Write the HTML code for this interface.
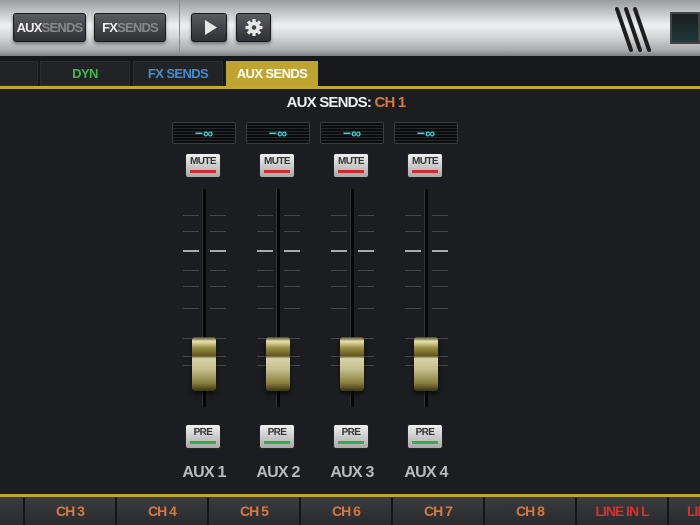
<!DOCTYPE html>
<html><head><style>
*{margin:0;padding:0;box-sizing:border-box}
body{width:700px;height:525px;overflow:hidden;background:#1c1d21;font-family:"Liberation Sans",sans-serif;position:relative}
.top{position:absolute;left:0;top:0;width:700px;height:56px;background:linear-gradient(#9a9b9d 0%,#c9cacc 25%,#eef0f1 45%,#d6d7d8 65%,#a9aaac 90%,#7d7e80 100%)}
.btn{position:absolute;top:13px;height:29px;border-radius:3px;background:linear-gradient(#5a5b5e,#2f3033);border:1px solid #1a1a1a;box-shadow:0 2px 3px rgba(0,0,0,.4);color:#888;font-weight:bold;font-size:13px;line-height:27px;text-align:center;letter-spacing:-0.8px}
.btn b{color:#eee}
.sep{position:absolute;left:179px;top:0;width:1px;height:56px;background:#8a8b8d}
.tabbar{position:absolute;top:56px;left:0;width:700px;height:30px;background:#17181b}
.tab{position:absolute;top:5px;height:25px;background:#222327;border:1px solid #2c2d31;font-weight:bold;font-size:13px;text-align:center;line-height:24px;letter-spacing:-0.6px}
.yl{position:absolute;left:0;width:700px;height:3px;background:#c0a830}
.col{position:absolute;top:0;width:74px;height:525px}
.meter{position:absolute;left:2px;top:122px;width:64px;height:22px;background:repeating-linear-gradient(#0b0c0d 0 2px,#26282a 2px 3px);border:1px solid #3a3b3e;border-radius:2px;color:#35d6d6;font-size:14px;font-weight:bold;text-align:center;line-height:20px}
.mute,.pre{position:absolute;left:15px;width:36px;height:25px;border-radius:3px;background:linear-gradient(#f0f0f0,#a8a8a8);border:1px solid #222;font-size:10px;font-weight:bold;color:#333;text-align:center;line-height:16px;letter-spacing:-0.6px}
.mute{top:153px}.pre{top:424px}
.mute i,.pre i{position:absolute;left:4px;right:4px;bottom:4px;height:3px;background:#d02a30}
.pre i{background:#30b040}
.track{position:absolute;left:32px;top:189px;width:4px;height:218px;background:#050505;border-left:1px solid #333}
.tk{position:absolute;height:1px;width:16px;background:#45464a}
.tk.b{height:2px;background:#aaa}
.cap{position:absolute;left:22px;top:337px;width:24px;height:54px;border-radius:3px;background:linear-gradient(#4a4320 0%,#e8e2b0 8%,#9a8f45 20%,#5d5420 35%,#d8d4a8 40%,#c4be8c 60%,#8a8040 85%,#3a3410 100%);box-shadow:0 3px 4px rgba(0,0,0,.6)}
.lbl{position:absolute;left:0;width:68px;top:464px;text-align:center;color:#bbb;font-weight:bold;font-size:16px;letter-spacing:-0.8px}
.bot{position:absolute;top:497px;left:0;width:700px;height:28px;background:linear-gradient(#3a3b3e,#2a2b2e)}
.ch{position:absolute;top:0;height:28px;width:92px;border-left:2px solid #151515;color:#d9783c;font-weight:bold;font-size:14px;text-align:center;line-height:28px;letter-spacing:-1px}
</style></head><body>
<div class="top">
<div class="btn" style="left:13px;width:73px"><b>AUX</b>SENDS</div>
<div class="btn" style="left:94px;width:72px"><b>FX</b>SENDS</div>
<div class="sep"></div>
<div class="btn" style="left:191px;width:36px"><svg width="36" height="27"><polygon points="13,6 13,21 25,13.5" fill="#e8e8e8"/></svg></div>
<div class="btn" style="left:236px;width:35px"><svg width="35" height="27"><g fill="#e8e8e8" transform="translate(17,13.5)"><circle r="6"/><g><rect x="-1.6" y="-8.5" width="3.2" height="17"/><rect x="-1.6" y="-8.5" width="3.2" height="17" transform="rotate(45)"/><rect x="-1.6" y="-8.5" width="3.2" height="17" transform="rotate(90)"/><rect x="-1.6" y="-8.5" width="3.2" height="17" transform="rotate(135)"/></g><circle r="2.3" fill="#444"/></g></svg></div>
<svg style="position:absolute;left:612px;top:4px" width="50" height="50"><g stroke="#1e1e1e" stroke-width="4" stroke-linecap="round"><line x1="5" y1="5" x2="19" y2="46"/><line x1="14" y1="5" x2="28" y2="46"/><line x1="23" y1="5" x2="37" y2="46"/></g></svg>
<div style="position:absolute;left:670px;top:12px;width:30px;height:32px;background:linear-gradient(#1c1c1c,#1e3a3a);border:2px solid #444"></div>
</div>
<div class="tabbar">
<div class="tab" style="left:-2px;width:40px"></div>
<div class="tab" style="left:40px;width:90px;color:#3fb94a">DYN</div>
<div class="tab" style="left:133px;width:90px;color:#3d8fd0">FX SENDS</div>
<div class="tab" style="left:226px;width:92px;background:#bfa52f;border-color:#bfa52f;color:#fff">AUX SENDS</div>
</div>
<div class="yl" style="top:86px"></div>
<div style="position:absolute;top:94px;left:0;width:700px;text-align:center;color:#eee;font-weight:bold;font-size:15px;letter-spacing:-0.8px"><span style="margin-left:-8px">AUX SENDS: <span style="color:#d9783c">CH 1</span></span></div>

<div class="col" style="left:170px">
<div class="meter">−∞</div><div class="mute">MUTE<i></i></div>
<div class="tk" style="left:13px;top:215px"></div><div class="tk" style="left:40px;top:215px"></div>
<div class="tk" style="left:13px;top:231px"></div><div class="tk" style="left:40px;top:231px"></div>
<div class="tk b" style="left:13px;top:250px"></div><div class="tk b" style="left:40px;top:250px"></div>
<div class="tk" style="left:13px;top:270px"></div><div class="tk" style="left:40px;top:270px"></div>
<div class="tk" style="left:13px;top:286px"></div><div class="tk" style="left:40px;top:286px"></div>
<div class="tk" style="left:13px;top:308px"></div><div class="tk" style="left:40px;top:308px"></div>
<div class="tk" style="left:13px;top:338px"></div><div class="tk" style="left:40px;top:338px"></div>
<div class="tk" style="left:13px;top:356px"></div><div class="tk" style="left:40px;top:356px"></div>
<div class="tk" style="left:13px;top:365px"></div><div class="tk" style="left:40px;top:365px"></div>
<div class="track"></div><div class="cap"></div>
<div class="pre">PRE<i></i></div><div class="lbl">AUX 1</div>
</div>
<div class="col" style="left:244px">
<div class="meter">−∞</div><div class="mute">MUTE<i></i></div>
<div class="tk" style="left:13px;top:215px"></div><div class="tk" style="left:40px;top:215px"></div>
<div class="tk" style="left:13px;top:231px"></div><div class="tk" style="left:40px;top:231px"></div>
<div class="tk b" style="left:13px;top:250px"></div><div class="tk b" style="left:40px;top:250px"></div>
<div class="tk" style="left:13px;top:270px"></div><div class="tk" style="left:40px;top:270px"></div>
<div class="tk" style="left:13px;top:286px"></div><div class="tk" style="left:40px;top:286px"></div>
<div class="tk" style="left:13px;top:308px"></div><div class="tk" style="left:40px;top:308px"></div>
<div class="tk" style="left:13px;top:338px"></div><div class="tk" style="left:40px;top:338px"></div>
<div class="tk" style="left:13px;top:356px"></div><div class="tk" style="left:40px;top:356px"></div>
<div class="tk" style="left:13px;top:365px"></div><div class="tk" style="left:40px;top:365px"></div>
<div class="track"></div><div class="cap"></div>
<div class="pre">PRE<i></i></div><div class="lbl">AUX 2</div>
</div>
<div class="col" style="left:318px">
<div class="meter">−∞</div><div class="mute">MUTE<i></i></div>
<div class="tk" style="left:13px;top:215px"></div><div class="tk" style="left:40px;top:215px"></div>
<div class="tk" style="left:13px;top:231px"></div><div class="tk" style="left:40px;top:231px"></div>
<div class="tk b" style="left:13px;top:250px"></div><div class="tk b" style="left:40px;top:250px"></div>
<div class="tk" style="left:13px;top:270px"></div><div class="tk" style="left:40px;top:270px"></div>
<div class="tk" style="left:13px;top:286px"></div><div class="tk" style="left:40px;top:286px"></div>
<div class="tk" style="left:13px;top:308px"></div><div class="tk" style="left:40px;top:308px"></div>
<div class="tk" style="left:13px;top:338px"></div><div class="tk" style="left:40px;top:338px"></div>
<div class="tk" style="left:13px;top:356px"></div><div class="tk" style="left:40px;top:356px"></div>
<div class="tk" style="left:13px;top:365px"></div><div class="tk" style="left:40px;top:365px"></div>
<div class="track"></div><div class="cap"></div>
<div class="pre">PRE<i></i></div><div class="lbl">AUX 3</div>
</div>
<div class="col" style="left:392px">
<div class="meter">−∞</div><div class="mute">MUTE<i></i></div>
<div class="tk" style="left:13px;top:215px"></div><div class="tk" style="left:40px;top:215px"></div>
<div class="tk" style="left:13px;top:231px"></div><div class="tk" style="left:40px;top:231px"></div>
<div class="tk b" style="left:13px;top:250px"></div><div class="tk b" style="left:40px;top:250px"></div>
<div class="tk" style="left:13px;top:270px"></div><div class="tk" style="left:40px;top:270px"></div>
<div class="tk" style="left:13px;top:286px"></div><div class="tk" style="left:40px;top:286px"></div>
<div class="tk" style="left:13px;top:308px"></div><div class="tk" style="left:40px;top:308px"></div>
<div class="tk" style="left:13px;top:338px"></div><div class="tk" style="left:40px;top:338px"></div>
<div class="tk" style="left:13px;top:356px"></div><div class="tk" style="left:40px;top:356px"></div>
<div class="tk" style="left:13px;top:365px"></div><div class="tk" style="left:40px;top:365px"></div>
<div class="track"></div><div class="cap"></div>
<div class="pre">PRE<i></i></div><div class="lbl">AUX 4</div>
</div>

<div class="yl" style="top:494px"></div>
<div class="bot">
<div class="ch" style="left:23px">CH 3</div>
<div class="ch" style="left:115px">CH 4</div>
<div class="ch" style="left:207px">CH 5</div>
<div class="ch" style="left:299px">CH 6</div>
<div class="ch" style="left:391px">CH 7</div>
<div class="ch" style="left:483px">CH 8</div>
<div class="ch" style="left:575px;color:#d8302a">LINE IN L</div>
<div class="ch" style="left:667px;color:#d8302a;text-align:left;padding-left:18px">LINE</div>
</div>
</body></html>
